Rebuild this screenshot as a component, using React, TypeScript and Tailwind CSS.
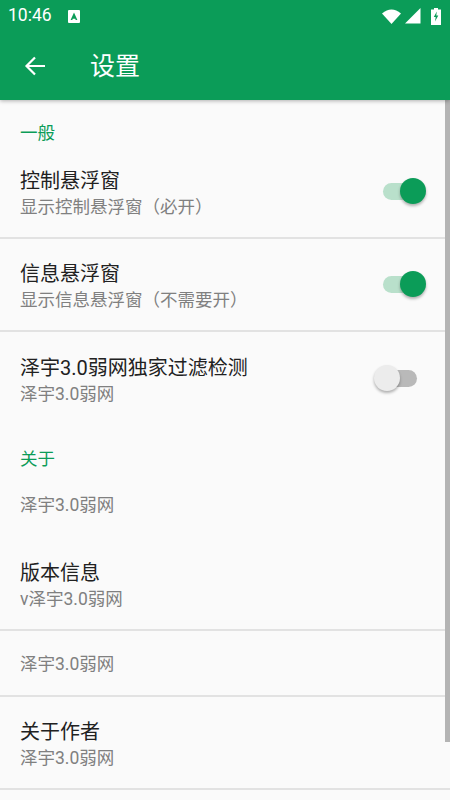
import React from "react";

const font = { fontFamily: '"Roboto", "Noto Sans CJK SC", sans-serif' };

const Toggle = ({ on }: { on: boolean }) => (
  <div className="relative h-[17px] w-[33px] shrink-0">
    <div className={on ? "h-full w-full rounded-full bg-[#b9e0cb]" : "h-full w-full rounded-full bg-[#b9b9b9]"} />
    <div
      className={
        on
          ? "absolute -top-[5px] -right-[10px] h-[26px] w-[26px] rounded-full bg-[#0b9c58] shadow-[0_2px_3px_rgba(0,0,0,0.3)]"
          : "absolute -top-[5px] -left-[10px] h-[26px] w-[26px] rounded-full bg-[#ececec] shadow-[0_2px_3px_rgba(0,0,0,0.3)]"
      }
    />
  </div>
);

const Row = ({
  title,
  sub,
  toggle,
  divider = true,
}: {
  title: string;
  sub: string;
  toggle?: "on" | "off";
  divider?: boolean;
}) => (
  <div className={`flex h-[93px] items-center pl-5 ${divider ? "border-b-2 border-[#e2e2e2]" : ""}`}>
    <div className="min-w-0 flex-1 pt-[2px]">
      <div className="text-[20px] leading-[28px] text-[#212121]">{title}</div>
      <div className="text-[17.5px] leading-[24px] text-[#808080]">{sub}</div>
    </div>
    {toggle === "on" && (
      <div className="mr-[34px]">
        <Toggle on />
      </div>
    )}
    {toggle === "off" && (
      <div className="mr-[33px]">
        <Toggle on={false} />
      </div>
    )}
  </div>
);

export default function App() {
  return (
    <div className="relative h-[800px] w-[450px] overflow-hidden bg-[#fafafa]" style={font}>
      <div className="relative z-10 h-[100px] bg-[#0b9c58] shadow-[0_1px_4px_rgba(0,0,0,0.3)]">
        <div className="flex h-[32px] items-center justify-between pl-2 pr-[9px] text-white">
          <div className="flex items-center">
            <span className="text-[17.5px] leading-none">10:46</span>
            <svg width="12" height="13" viewBox="0 0 12 13" className="ml-[16px]">
              <rect width="12" height="13" rx="1" fill="#fff" />
              <path d="M2.600 10 6 2.500 9.400 10H7.700L7.200 8.700H4.800L4.300 10Z" fill="#0b9c58" />
            </svg>
          </div>
          <div className="flex items-center">
            <svg width="19" height="15" viewBox="0 0 19 15">
              <path d="M0 4.500Q9.500-3.500 19 4.500L9.500 15Z" fill="#fff" />
            </svg>
            <svg width="16" height="16" viewBox="0 0 16 16" className="ml-[4px]">
              <path d="M0 15.500 15.500 0V15.500Z" fill="#fff" />
            </svg>
            <svg width="10" height="17" viewBox="0 0 10 17" className="ml-[10px]">
              <path d="M3 0h4v1.500h3V17H0V1.500h3Z" fill="#fff" />
              <path d="M5.800 3.500 2.800 9h1.900L4 13.500 7.300 7.500H5.300Z" fill="#0b9c58" />
            </svg>
          </div>
        </div>
        <div className="flex h-[68px] items-center pl-[23px] text-white">
          <svg width="24" height="24" viewBox="0 0 24 24" fill="none" stroke="#fff" strokeWidth="2.200">
            <path d="M22 12H3.500M12 3.500 3.500 12l8.500 8.500" />
          </svg>
          <span className="ml-[43px] text-[25px] leading-none">设置</span>
        </div>
      </div>

      <div className="flex h-[46px] items-end pl-5 pb-[4px] text-[17.5px] leading-none text-[#0b9c58]">一般</div>
      <Row title="控制悬浮窗" sub="显示控制悬浮窗（必开）" toggle="on" />
      <Row title="信息悬浮窗" sub="显示信息悬浮窗（不需要开）" toggle="on" />
      <Row title="泽宇3.0弱网独家过滤检测" sub="泽宇3.0弱网" toggle="off" divider={false} />
      <div className="flex h-[48px] items-end pl-5 pb-[5px] text-[17.5px] leading-none text-[#0b9c58]">关于</div>
      <div className="flex h-[65px] items-center pl-5 text-[17.5px] text-[#808080]">泽宇3.0弱网</div>
      <Row title="版本信息" sub="v泽宇3.0弱网" />
      <div className="flex h-[66px] items-center border-b-2 border-[#e2e2e2] pl-5 pt-[2px] text-[17.5px] text-[#808080]">泽宇3.0弱网</div>
      <Row title="关于作者" sub="泽宇3.0弱网" />

      <div className="absolute right-0 top-[100px] h-[642px] w-[5px] bg-[#b4b4b4]" />
    </div>
  );
}
